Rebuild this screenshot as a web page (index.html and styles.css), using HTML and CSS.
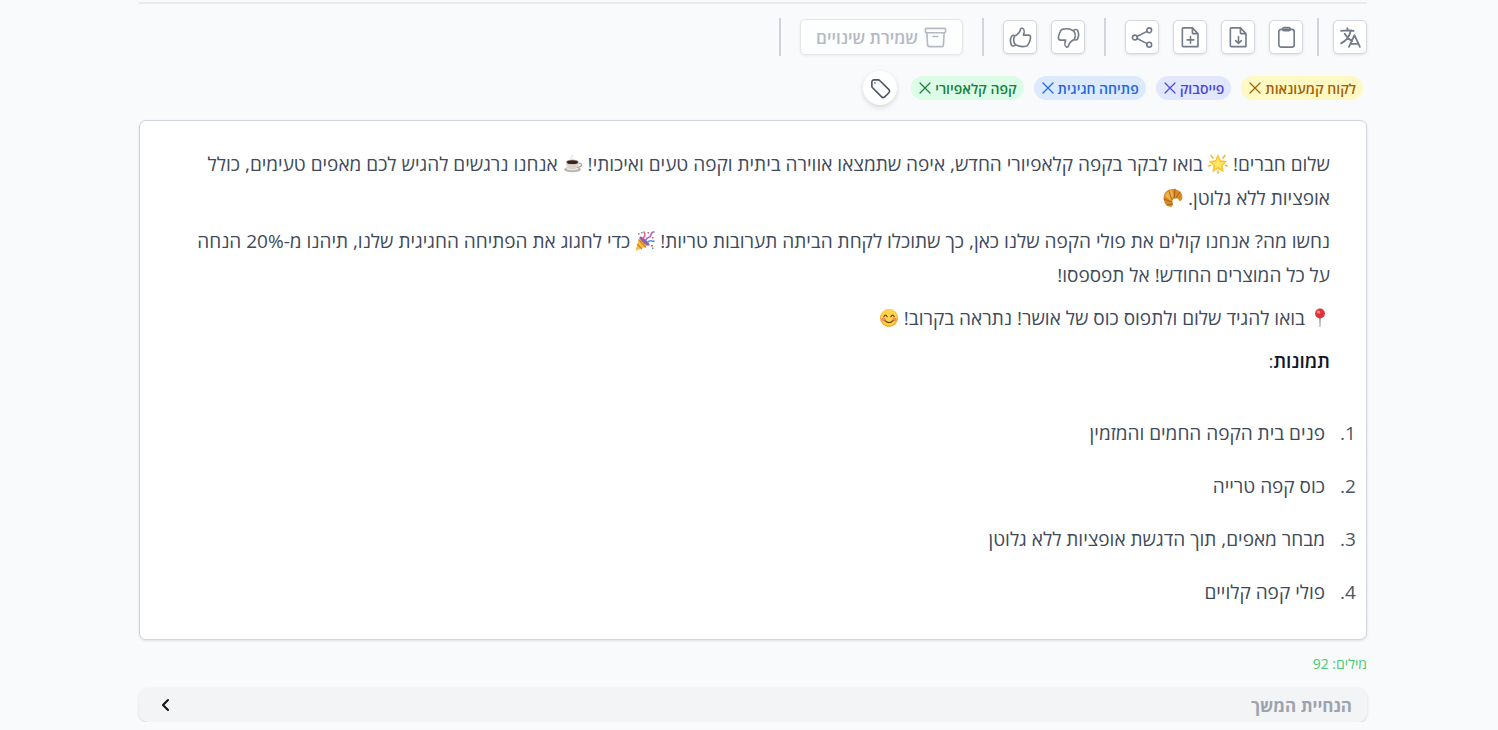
FILE: index.html
```
<!DOCTYPE html>
<html lang="he" dir="rtl">
<head>
<meta charset="utf-8">
<title>עורך תוכן</title>
<link rel="stylesheet" href="styles.css">
</head>
<body>
<main class="page">
  <div class="toolbar" role="toolbar" aria-label="פעולות">
    <button class="tool" aria-label="תרגום"><svg viewBox="1 1 22 22"><path d="M10.5 21l5.25-11.25L21 21m-9-3h7.5M3 5.6A48.500 48.500 0 0 1 9 5.200m0 0q1.700 0 3.300.1M9 5.200V3m3.300 2.300C11.200 10.700 7.700 15.200 3 17.600M12.300 5.300q1.400.1 2.700.3M13.600 15.500A18 18 0 0 1 6.400 8.400"/></svg></button>
    <span class="divider"></span>
    <button class="tool" aria-label="העתקה"><svg viewBox="0 0 24 24"><rect x="4" y="3.500" width="16" height="18.500" rx="2.500"/><path d="M8 3.500c0-1 .6-1.800 1.600-1.800h4.800c1 0 1.600.8 1.600 1.800 0 .9-.6 1.500-1.500 1.500h-5C8.600 5 8 4.400 8 3.500z"/></svg></button>
    <button class="tool" aria-label="הורדה"><svg viewBox="0 0 24 24"><path d="M4.500 2H14l5.800 6v13.500H4.500A1 1 0 0 1 3.500 20.500V3a1 1 0 0 1 1-1zM14 2v5.200a.8.8 0 0 0 .8.800h5M12 11v7M9 15.200l3 3 3-3"/></svg></button>
    <button class="tool" aria-label="מסמך חדש"><svg viewBox="0 0 24 24"><path d="M4.500 2H14l5.800 6v13.500H4.500A1 1 0 0 1 3.500 20.500V3a1 1 0 0 1 1-1zM14 2v5.200a.8.8 0 0 0 .8.800h5M12 11v7M8.500 14.500h7"/></svg></button>
    <button class="tool" aria-label="שיתוף"><svg viewBox="0 0 24 24"><circle cx="4" cy="12" r="2.500"/><circle cx="19" cy="4.500" r="2.500"/><circle cx="19" cy="19.500" r="2.500"/><path d="M6.300 10.900l10.400-5.300M6.300 13.100l10.400 5.300"/></svg></button>
    <span class="divider wide"></span>
    <button class="tool" aria-label="לא אהבתי"><svg viewBox="0 0 24 24"><path d="M17.500 5.200C14 2.800 9 2.500 5.500 3.500 3.500 4.300 1.500 10 1.500 12.500c0 1.700 1 2.300 2.500 2.300h5c-1 2.400-1.200 6 .7 7 1.300.6 2.200-.2 2.400-1.400.4-2.500 1.900-4.600 5.900-6.400M17.500 5.200c1.700 2.300 1.900 6.300.5 8.800M17.500 5.200c.2-1.800 3.200-2.200 4.100-.3 1.200 2.500 1.200 5.700 0 8.400-.7 1.600-2.800 1.700-3.600.7"/></svg></button>
    <button class="tool" aria-label="אהבתי"><svg viewBox="0 0 24 24"><path d="M6.500 19.300c3.500 2.200 8.500 2.500 12 1.500 2-.8 4-6.500 4-9 0-1.700-1-2.300-2.500-2.300h-5c1-2.400 1.200-6-.7-7-1.300-.6-2.200.2-2.400 1.400-.4 2.500-1.900 4.600-5.900 6.400M6.500 19.300c-1.700-2.300-1.900-6.300-.5-9M6.500 19.300c-.2 1.800-3.200 2.200-4.100.3-1.200-2.500-1.200-5.700 0-8.400.7-1.600 2.800-1.900 3.600-.9"/></svg></button>
    <span class="divider wide"></span>
    <button class="save" disabled><svg viewBox="0 0 24 24"><rect x="1.500" y="2.500" width="21" height="4.500" rx="1"/><path d="M3 7l.7 12.300c0 1.200.9 2.200 2.200 2.200h12.200c1.300 0 2.200-1 2.200-2.200L21 7M9.500 11h5"/></svg>שמירת שינויים</button>
    <span class="divider wide"></span>
  </div>

  <div class="tags">
    <span class="tag yellow">לקוח קמעונאות<button aria-label="הסרת לקוח קמעונאות"><svg viewBox="0 0 12 12"><path d="M1 1l10 10M11 1L1 11"/></svg></button></span>
    <span class="tag indigo">פייסבוק<button aria-label="הסרת פייסבוק"><svg viewBox="0 0 12 12"><path d="M1 1l10 10M11 1L1 11"/></svg></button></span>
    <span class="tag blue">פתיחה חגיגית<button aria-label="הסרת פתיחה חגיגית"><svg viewBox="0 0 12 12"><path d="M1 1l10 10M11 1L1 11"/></svg></button></span>
    <span class="tag green">קפה קלאפיורי<button aria-label="הסרת קפה קלאפיורי"><svg viewBox="0 0 12 12"><path d="M1 1l10 10M11 1L1 11"/></svg></button></span>
    <button class="add-tag" aria-label="הוספת תגית"><svg viewBox="0 0 24 24"><path d="M9.600 3H5.200A2.200 2.200 0 0 0 3 5.200v4.400c0 .6.200 1.200.7 1.600l9.500 9.600c.7.700 1.800.9 2.600.3a18 18 0 0 0 5.300-5.300c.6-.8.4-1.900-.3-2.600l-9.600-9.500A2.200 2.200 0 0 0 9.600 3z"/><path d="M6.200 6.200h.1"/></svg></button>
  </div>

  <article class="editor">
    <p>שלום חברים! <svg class="emoji" viewBox="0 0 20 20" aria-hidden="true"><path d="M10 1l2.600 5.600 6.100.8-4.500 4.200 1.100 6L10 14.700 4.700 17.600l1.100-6L1.300 7.400l6.100-.8z" fill="#fdc92f" stroke="#f6b51e" stroke-width=".6"/><path d="M10 3.500l1.700 4.300 4.300.7-3.200 2.700.8 3.500L10 12.800l-3.500 1.900.8-3.500L4 8.500l4.300-.7z" fill="#ffe763"/><path d="M3 1.500l2 2.500M17 1.500L15 4M.7 12l2-.8M19.300 12l-2-.8M10 17v2" stroke="#f6b51e" stroke-width="1.500" stroke-linecap="round"/></svg> בואו לבקר בקפה קלאפיורי החדש, איפה שתמצאו אווירה ביתית וקפה טעים ואיכותי! <svg class="emoji" viewBox="0 0 20 20" aria-hidden="true"><ellipse cx="9.500" cy="15.500" rx="8.500" ry="2.800" fill="#b9b4ad"/><ellipse cx="9.500" cy="14.500" rx="6" ry="1.700" fill="#eeeae4"/><path d="M15 9.500c5-1 5 3.500-.8 3.800" fill="none" stroke="#aaa59d" stroke-width="1.200"/><path d="M3 8c0 4 2 7.500 6.300 7.500S15.800 12 15.800 8z" fill="#d8d4cd"/><ellipse cx="9.400" cy="8" rx="6.400" ry="2.400" fill="#bbb5ad"/><ellipse cx="9.400" cy="8.200" rx="5.500" ry="1.900" fill="#3a2119"/><path d="M9 5c-3-2 2-2 0-4" fill="none" stroke="#d5d7da"/></svg> אנחנו נרגשים להגיש לכם מאפים טעימים, כולל אופציות ללא גלוטן. <svg class="emoji" viewBox="0 0 20 20" aria-hidden="true"><path d="M9 18.500C4 20 .5 15 .6 9.500 1 4 5 .8 10.500 1c5 .2 9 3.500 8.900 8 0 2.300-1.100 4-2.600 4.300-1-2-2.200-3.500-4.300-3-3 .4-3.800 3-2.400 6.200z" fill="#d88a26"/><path d="M2 8c1-4 4-5.800 7-6l1.800 7C8 9.500 7.500 11 7.800 13z" fill="#edb04b"/><path d="M6 3l2.500 8M12 1l-.8 9M17 4l-4 6M1 11l8 3M4 17l5.500-1" fill="none" stroke="#a65e17" stroke-width=".9"/></svg></p>
    <p>נחשו מה? אנחנו קולים את פולי הקפה שלנו כאן, כך שתוכלו לקחת הביתה תערובות טריות! <svg class="emoji" viewBox="0 0 20 20" aria-hidden="true"><path d="M5 5.500L.8 18.300q-.3 1.500 1.200 1L14.500 14z" fill="#f4c13d"/><path d="M4 9l6.500 7M2.500 13.500l4 4" stroke="#e17b25" stroke-width="1.400"/><path d="M5 5.500c2-1 10.500 7 9.500 8.500s-4 0-6.500-2.500S3.800 6.500 5 5.500z" fill="#8c62b4"/><path d="M8 7c3-2 2-4 1-6" fill="none" stroke="#e85374" stroke-width="1.500"/><path d="M11 9c1-4 4-1 5-5s2-3 3-3" fill="none" stroke="#ad63c9" stroke-width="1.500"/><path d="M13 11c2-3 4 0 6-1" fill="none" stroke="#4f91dc" stroke-width="1.500"/><path d="M3 2h1.500v1.500H3zM12.500 1H14v1.500h-1.500zM17 6h1.500v1.500H17zM16 14h2v1.500h-2z" fill="#e85374"/><path d="M6 1h1.500v1.500H6zM17 16.500h1.500V18H17z" fill="#5995dc"/></svg> כדי לחגוג את הפתיחה החגיגית שלנו, תיהנו מ-20% הנחה על כל המוצרים החודש! אל תפספסו!</p>
    <p><svg class="emoji" viewBox="0 0 20 20" aria-hidden="true"><path d="M9.300 9h1.400l-.3 10h-.8z" fill="#85878a"/><circle cx="10" cy="5.500" r="4.900" fill="#e1323a"/><ellipse cx="8.600" cy="3.900" rx="1.800" ry="1.500" fill="#ff918e"/></svg> בואו להגיד שלום ולתפוס כוס של אושר! נתראה בקרוב! <svg class="emoji" viewBox="0 0 20 20" aria-hidden="true"><circle cx="10" cy="10" r="9" fill="#f7a927"/><circle cx="10" cy="9.300" r="8.200" fill="#ffd34a"/><ellipse cx="4.500" cy="11.500" rx="2.300" ry="1.700" fill="#f58b52"/><ellipse cx="15.500" cy="11.500" rx="2.300" ry="1.700" fill="#f58b52"/><path d="M4.800 8.700q1.700-3 3.400 0M11.800 8.700q1.700-3 3.400 0M6 12.700q4 4 8 0" fill="none" stroke="#70421c" stroke-width="1.200" stroke-linecap="round"/></svg></p>
    <p><strong>תמונות</strong>:</p>
    <ol>
      <li>פנים בית הקפה החמים והמזמין</li>
      <li>כוס קפה טרייה</li>
      <li>מבחר מאפים, תוך הדגשת אופציות ללא גלוטן</li>
      <li>פולי קפה קלויים</li>
    </ol>
  </article>

  <div class="count">מילים: 92</div>
  <button class="followup" aria-expanded="false"><span>הנחיית המשך</span><svg viewBox="0 0 12 16"><path d="M9 3L4 8l5 5"/></svg></button>
</main>
</body>
</html>
```
FILE: styles.css
```
* { box-sizing: border-box; }

body {
  margin: 0;
  background: #f9fafc;
  color: #404a5b;
  font-family: "Open Sans", "Noto Sans", sans-serif;
  font-size: 19px;
}

button {
  font: inherit;
  color: inherit;
  padding: 0;
  border: 0;
  background: none;
}

svg {
  fill: none;
  stroke-linecap: round;
  stroke-linejoin: round;
}

.page {
  margin: 2px 131px 0 139px;
  border-top: 2px solid #e8eaee;
}

.toolbar {
  display: flex;
  align-items: center;
  gap: 14px;
  padding-top: 14px;
}

.tool {
  display: grid;
  place-items: center;
  width: 34px;
  height: 34px;
  border: 1px solid #d5d8df;
  border-radius: 5px;
  background: #fff;
  box-shadow: 0 1px 3px #0000001a;
}

.tool svg, .save svg, .add-tag svg {
  width: 23px;
  height: 23px;
  stroke: #747b89;
  stroke-width: 1.7;
}

.divider {
  width: 2px;
  height: 38px;
  background: #d1d5db;
}

.wide { margin: 0 5px; }

.save {
  display: flex;
  align-items: center;
  gap: 6px;
  height: 36px;
  padding: 0 15px;
  border: 1px solid #e4e6ea;
  border-radius: 5px;
  background: #fdfefe;
  color: #b5b9c3;
  font-size: 17px;
  font-weight: 600;
  box-shadow: 0 1px 3px #0000000f;
}

.save svg { stroke: #b5b9c3; }

.tags {
  display: flex;
  align-items: center;
  gap: 10px;
  padding: 15px 4px;
}

.tag {
  display: flex;
  align-items: center;
  gap: 4px;
  height: 24px;
  padding: 0 7px 0 8px;
  border-radius: 12px;
  font-size: 14px;
  font-weight: 600;
}

.tag button { display: flex; }

.tag svg {
  width: 12px;
  height: 12px;
  stroke: currentColor;
  stroke-width: 1.2;
}

.yellow { background: #fef8c3; color: #a16207; }
.indigo { background: #e0e7ff; color: #4f46d5; }
.blue { background: #dbeafe; color: #2563df; }
.green { background: #dcfce7; color: #15803d; }

.add-tag {
  display: grid;
  place-items: center;
  width: 34px;
  height: 34px;
  margin-inline-start: 4px;
  border-radius: 50%;
  background: #fff;
  box-shadow: 0 2px 5px #00000026;
}

.add-tag svg { stroke: #4b5563; }

.editor {
  padding: 26px 36px 30px 40px;
  border: 1px solid #d1d5db;
  border-radius: 7px;
  background: #fff;
  box-shadow: 0 1px 3px #0000001a;
  line-height: 34px;
}

.editor p { margin: 0 0 9px; }

.editor strong {
  color: #111827;
  font-weight: 600;
}

.emoji {
  width: 20px;
  height: 20px;
  vertical-align: -3px;
}

.editor ol {
  margin: 38px -5px 0 0;
  padding: 0;
}

.editor li { padding-inline-start: 10px; }
.editor li + li { margin-top: 19px; }
.editor li::marker { color: #4b5563; }

.count {
  margin-top: 12px;
  color: #4acb72;
  font-size: 14px;
  line-height: 24px;
}

.followup {
  display: flex;
  align-items: center;
  justify-content: space-between;
  width: 100%;
  height: 34px;
  margin-top: 12px;
  padding: 0 15px 0 20px;
  border-radius: 9px;
  background: #f3f4f6;
  box-shadow: 0 1px 3px #00000026;
  color: #9ca3af;
  font-size: 17px;
  font-weight: 700;
}

.followup svg {
  width: 12px;
  height: 16px;
  stroke: #111;
  stroke-width: 2;
}
```
